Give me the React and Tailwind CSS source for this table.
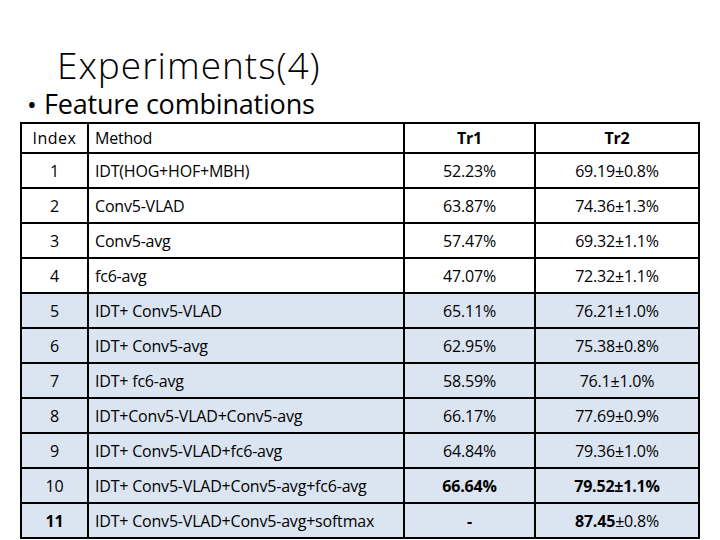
import React from "react"

const rows = [
  { idx: "1", method: "IDT(HOG+HOF+MBH)", tr1: "52.23%", tr2: "69.19±0.8%" },
  { idx: "2", method: "Conv5-VLAD", tr1: "63.87%", tr2: "74.36±1.3%" },
  { idx: "3", method: "Conv5-avg", tr1: "57.47%", tr2: "69.32±1.1%" },
  { idx: "4", method: "fc6-avg", tr1: "47.07%", tr2: "72.32±1.1%" },
  { idx: "5", method: "IDT+ Conv5-VLAD", tr1: "65.11%", tr2: "76.21±1.0%", blue: true },
  { idx: "6", method: "IDT+ Conv5-avg", tr1: "62.95%", tr2: "75.38±0.8%", blue: true },
  { idx: "7", method: "IDT+ fc6-avg", tr1: "58.59%", tr2: "76.1±1.0%", blue: true },
  { idx: "8", method: "IDT+Conv5-VLAD+Conv5-avg", tr1: "66.17%", tr2: "77.69±0.9%", blue: true },
  { idx: "9", method: "IDT+ Conv5-VLAD+fc6-avg", tr1: "64.84%", tr2: "79.36±1.0%", blue: true },
  { idx: "10", method: "IDT+ Conv5-VLAD+Conv5-avg+fc6-avg", tr1: <b>66.64%</b>, tr2: <b>79.52±1.1%</b>, blue: true },
  {
    idx: <b>11</b>,
    method: "IDT+ Conv5-VLAD+Conv5-avg+softmax",
    tr1: <b>-</b>,
    tr2: (
      <>
        <b>87.45</b>±0.8%
      </>
    ),
    blue: true,
  },
]

export default function App() {
  return (
    <div className="w-[720px] h-[540px] bg-white text-black overflow-hidden" style={{ fontFamily: "'Open Sans', 'Noto Sans', sans-serif" }}>
      <h1 className="pl-[57px] pt-[46px] text-[37px] leading-[38px] font-light tracking-[1px]">Experiments(4)</h1>
      <div className="flex items-center mt-[5px] pl-[27px] h-[30px] text-[27px] leading-[30px] tracking-[-0.2px]">
        <span className="w-[17px] text-[26px]">•</span>
        <span>Feature combinations</span>
      </div>
      <table className="ml-[20px] mt-[3px] w-[680px] border-collapse table-fixed text-[16px] tracking-[-0.2px]">
        <colgroup>
          <col className="w-[67px]" />
          <col className="w-[316px]" />
          <col className="w-[131px]" />
          <col className="w-[164px]" />
        </colgroup>
        <thead>
          <tr className="h-[30px]">
            <th className="border-[2.5px] border-black font-normal text-center tracking-[0.5px]">Index</th>
            <th className="border-[2.5px] border-black font-normal text-left pl-[6px]">Method</th>
            <th className="border-[2.5px] border-black font-bold text-center">Tr1</th>
            <th className="border-[2.5px] border-black font-bold text-center">Tr2</th>
          </tr>
        </thead>
        <tbody>
          {rows.map((r, i) => (
            <tr key={i} className={r.blue ? "h-[35px] bg-[#dbe5f1]" : "h-[35px] bg-white"}>
              <td className="border-[2.5px] border-black text-center">{r.idx}</td>
              <td className="border-[2.5px] border-black text-left pl-[6px]">{r.method}</td>
              <td className="border-[2.5px] border-black text-center">{r.tr1}</td>
              <td className="border-[2.5px] border-black text-center">{r.tr2}</td>
            </tr>
          ))}
        </tbody>
      </table>
    </div>
  )
}
